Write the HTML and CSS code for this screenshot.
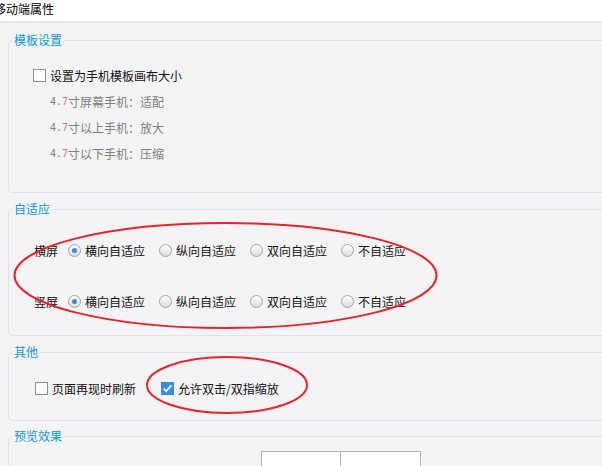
FILE: index.html
```html
<!DOCTYPE html>
<html lang="zh-CN">
<head>
<meta charset="utf-8">
<title>移动端属性</title>
<link rel="stylesheet" href="styles.css">
</head>
<body>
<div class="page">
  <div class="titlebar"><span class="title">移动端属性</span></div>

  <fieldset class="group g1">
    <legend>模板设置</legend>
    <div class="row pad-a">
      <span class="cb"></span><span class="lbl">设置为手机模板画布大小</span>
    </div>
    <div class="row sub"><span class="num">4.<span class="seven">7</span></span>寸屏幕手机：适配</div>
    <div class="row sub"><span class="num">4.<span class="seven">7</span></span>寸以上手机：放大</div>
    <div class="row sub"><span class="num">4.<span class="seven">7</span></span>寸以下手机：压缩</div>
  </fieldset>

  <fieldset class="group g2">
    <legend>自适应</legend>
    <div class="row pad-b">
      <span class="rowname">横屏</span>
      <span class="opt"><span class="radio on"></span><span class="lbl">横向自适应</span></span>
      <span class="opt"><span class="radio"></span><span class="lbl">纵向自适应</span></span>
      <span class="opt"><span class="radio"></span><span class="lbl">双向自适应</span></span>
      <span class="opt"><span class="radio"></span><span class="lbl">不自适应</span></span>
    </div>
    <div class="row pad-b row2">
      <span class="rowname">竖屏</span>
      <span class="opt"><span class="radio on"></span><span class="lbl">横向自适应</span></span>
      <span class="opt"><span class="radio"></span><span class="lbl">纵向自适应</span></span>
      <span class="opt"><span class="radio"></span><span class="lbl">双向自适应</span></span>
      <span class="opt"><span class="radio"></span><span class="lbl">不自适应</span></span>
    </div>
  </fieldset>

  <fieldset class="group g3">
    <legend>其他</legend>
    <div class="row pad-c">
      <span class="cb"></span><span class="lbl first">页面再现时刷新</span>
      <span class="cb on"><svg viewBox="0 0 13 13" width="13" height="13"><path d="M2.6 6.6 L5.2 9.2 L10.4 3.4" fill="none" stroke="#fff" stroke-width="1.7"/></svg></span><span class="lbl">允许双击/双指缩放</span>
    </div>
  </fieldset>

  <fieldset class="group g4">
    <legend>预览效果</legend>
    <div class="preview">
      <div class="pcell"></div>
      <div class="pcell"></div>
    </div>
  </fieldset>

  <svg class="marks" width="602" height="466" viewBox="0 0 602 466">
    <ellipse cx="225.5" cy="275.5" rx="211" ry="52.5" fill="none" stroke="#e8232b" stroke-width="2"/>
    <ellipse cx="227" cy="385" rx="80" ry="28" fill="none" stroke="#e8232b" stroke-width="2"/>
  </svg>
</div>
</body>
</html>
```
FILE: styles.css
```css
* { box-sizing: border-box; }
html, body {
  margin: 0;
  padding: 0;
  background: #f4f4f6;
  overflow: hidden;
}
body {
  font-family: "Noto Sans CJK SC", "Noto Sans", sans-serif;
  font-size: 12px;
  color: #111;
}
.page {
  position: relative;
  width: 602px;
  height: 466px;
  overflow: hidden;
}
.titlebar {
  height: 23px;
  background: #fff;
  border-bottom: 2px solid #e5e5e7;
  line-height: 17px;
  font-size: 12px;
  color: #000;
}
.title {
  display: inline-block;
  margin-left: -6px;
}
.group {
  margin: 0 -40px 0 8px;
  padding: 0;
  border: 1px solid #e2e2e6;
  border-radius: 4px;
  min-width: 0;
}
.group legend {
  margin-left: 3px;
  padding: 0 2px;
  line-height: 16px;
  color: #1296db;
  font-size: 12px;
}
.g1 { margin-top: 9px; padding: 14px 0 26px 0; }
.g2 { margin-top: 8px; padding: 20px 0 21px 0; }
.g3 { margin-top: 8px; padding: 15px 0 19px 0; }
.g4 { margin-top: 7px; padding: 7px 0 0 0; }

.row {
  height: 26px;
  display: flex;
  align-items: center;
  white-space: nowrap;
}
.pad-a { padding-left: 24px; }
.pad-b { padding-left: 25px; }
.pad-c { padding-left: 26px; }
.row2 { margin-top: 25px; }
.sub {
  padding-left: 41px;
  color: #808080;
}
.num {
  font-family: "DejaVu Sans Mono", monospace;
  font-size: 10px;
  color: #808080;
}
.seven { color: #d07a7a; }

.cb {
  width: 13px;
  height: 13px;
  border: 1px solid #8e8e8e;
  background: #fcfcfc;
  margin-right: 4px;
  flex: none;
  display: inline-flex;
}
.cb.on {
  border-color: #3a8ae6;
  background: #3a8ae6;
}
.cb.on svg { margin: -1px; }
.lbl { color: #111; }
.lbl.first { margin-right: 25px; }

.rowname {
  width: 34px;
  flex: none;
}
.opt {
  width: 91px;
  flex: none;
  display: inline-flex;
  align-items: center;
}
.radio {
  width: 13px;
  height: 13px;
  border-radius: 50%;
  border: 1px solid #a4a4a4;
  background: linear-gradient(#ffffff, #dcdcdc);
  margin-right: 4px;
  flex: none;
  display: inline-flex;
  align-items: center;
  justify-content: center;
}
.radio.on::after {
  content: "";
  width: 5px;
  height: 5px;
  border-radius: 50%;
  background: #3b86e8;
}

.preview {
  margin-left: 252px;
  width: 160px;
  height: 80px;
  display: flex;
  border: 1px solid #b4b4b4;
  border-bottom: none;
  background: #fff;
}
.pcell {
  width: 79px;
  border-right: 1px solid #b4b4b4;
}
.pcell:last-child { border-right: none; flex: 1; }

.marks {
  position: absolute;
  left: 0;
  top: 0;
  pointer-events: none;
}
```
